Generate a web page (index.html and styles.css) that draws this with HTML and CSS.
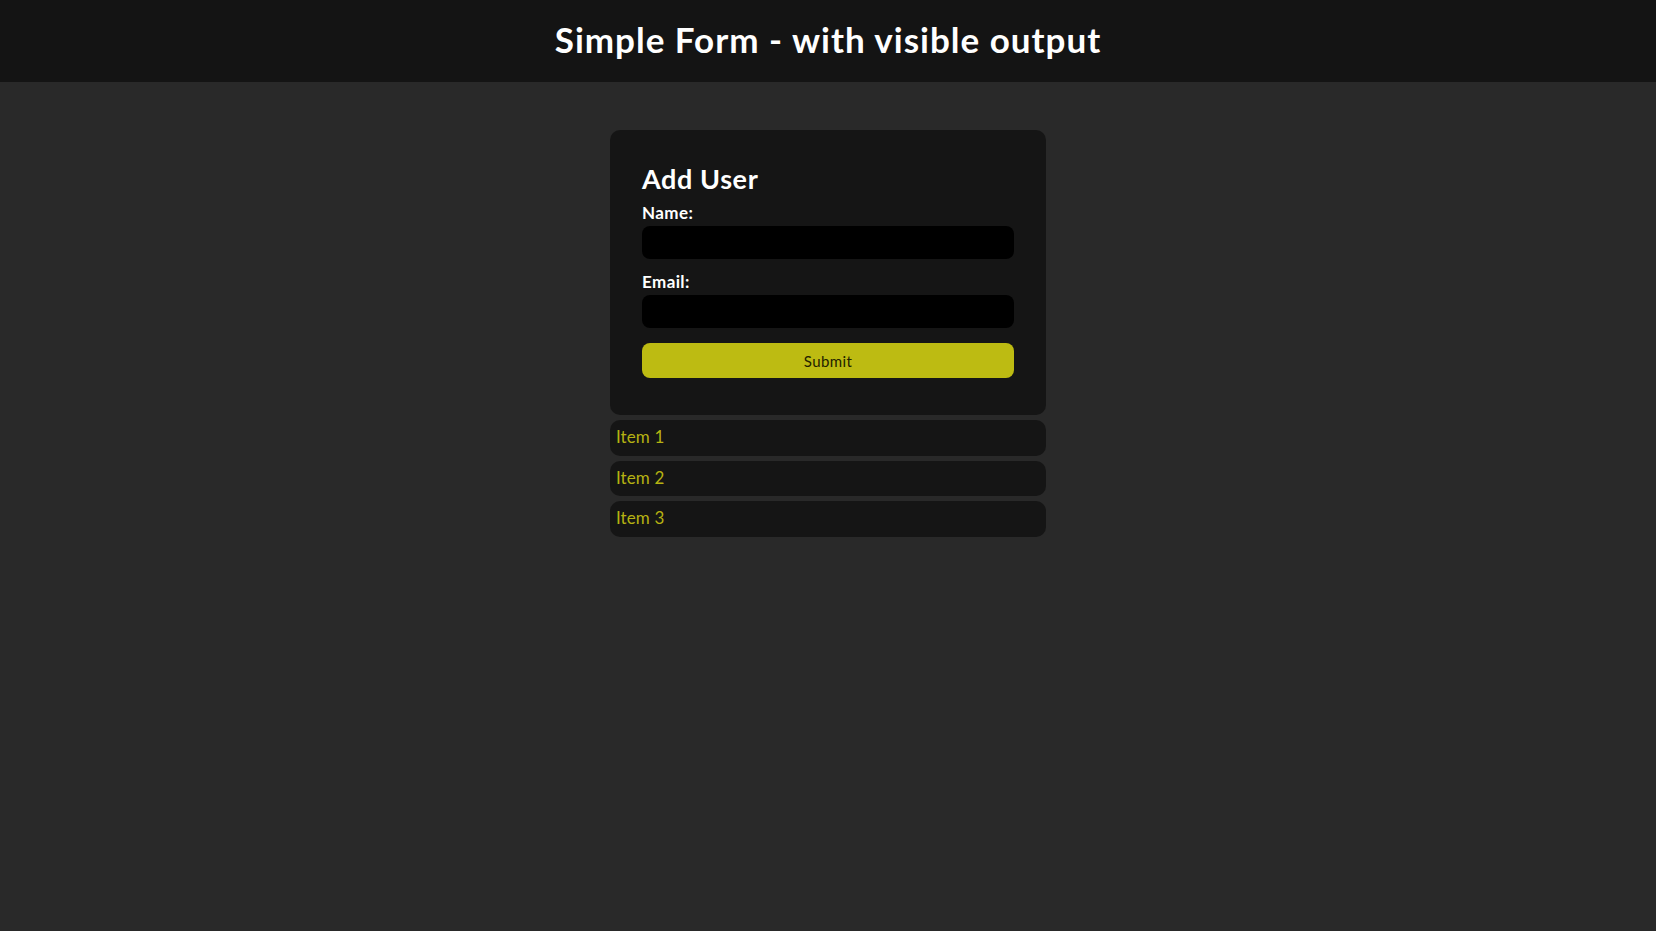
FILE: index.html
```html
<!DOCTYPE html>
<html lang="en">
<head>
<meta charset="utf-8">
<title>Simple Form</title>
<link rel="stylesheet" href="styles.css">
</head>
<body>
<header class="topbar">
  <h1 class="title">Simple Form - with visible output</h1>
</header>
<main class="main">
  <form class="card">
    <h2 class="card-title">Add User</h2>
    <label class="label" for="name">Name:</label>
    <input class="input" id="name" type="text">
    <label class="label label-email" for="email">Email:</label>
    <input class="input" id="email" type="email">
    <button class="submit" type="button">Submit</button>
  </form>
  <ul class="list">
    <li class="item">Item 1</li>
    <li class="item">Item 2</li>
    <li class="item">Item 3</li>
  </ul>
</main>
</body>
</html>
```
FILE: styles.css
```css
* { box-sizing: border-box; }
html, body { margin: 0; padding: 0; }
body {
  background: #292929;
  color: #ffffff;
  font-family: Lato, "Open Sans", sans-serif;
  min-height: 931px;
}
.topbar {
  background: #141414;
  height: 82px;
  display: flex;
  align-items: center;
  justify-content: center;
}
.title {
  margin: 0 0 4px;
  font-size: 35px;
  font-weight: 700;
  letter-spacing: 1px;
  color: #ffffff;
}
.main {
  width: 436px;
  margin: 48px auto 0;
  display: flex;
  flex-direction: column;
}
.card {
  background: #151515;
  border-radius: 10px;
  padding: 33px 32px 37px;
  display: flex;
  flex-direction: column;
}
.card-title {
  margin: 0 0 8px;
  font-size: 27px;
  font-weight: 700;
  line-height: 32px;
  letter-spacing: 0.6px;
}
.label {
  font-size: 17px;
  font-weight: 700;
  line-height: 20px;
  margin-bottom: 3px;
  letter-spacing: 0.4px;
}
.label-email { margin-top: 13px; }
.input {
  height: 33px;
  background: #000000;
  border: none;
  border-radius: 8px;
  color: #fff;
  outline: none;
  padding: 0 10px;
}
.submit {
  margin-top: 15px;
  height: 35px;
  background: #bdbb12;
  border: none;
  border-radius: 8px;
  color: #222200;
  font-family: Lato, "Open Sans", sans-serif;
  font-size: 15px;
  font-weight: 400;
  letter-spacing: 0.4px;
}
.list {
  list-style: none;
  margin: 5px 0 0;
  padding: 0;
  display: flex;
  flex-direction: column;
  gap: 5px;
}
.item {
  background: #151515;
  border-radius: 10px;
  height: 35.5px;
  padding: 7px 6px 0;
  color: #b5b212;
  font-size: 17px;
  line-height: 20px;
  letter-spacing: 0.1px;
}
```
